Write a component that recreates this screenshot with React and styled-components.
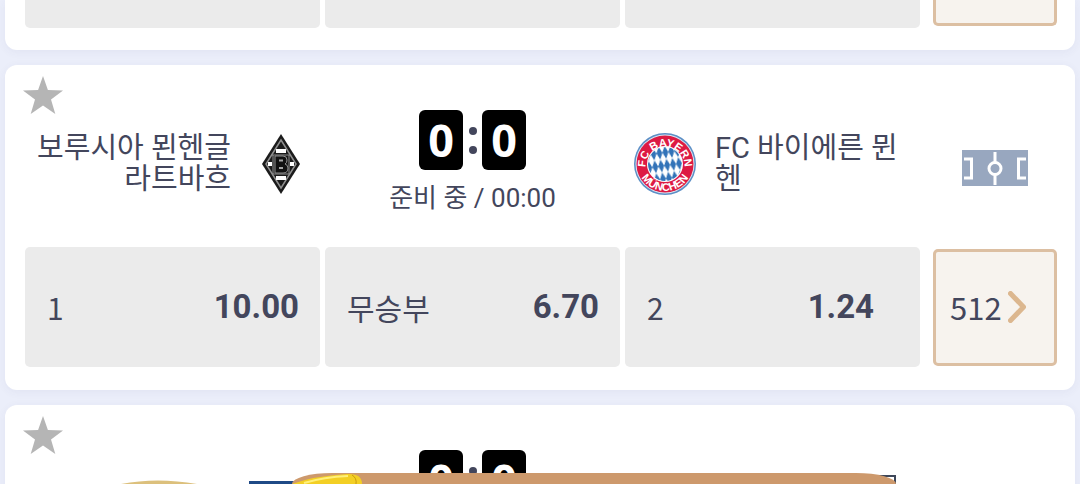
import React from "react"
import styled, { createGlobalStyle } from "styled-components"

const theme = {
  text: "#43465c",
  cell: "#ebebeb",
  accent: "#dcbfa2",
  accentBackground: "#f7f3ee",
  bar: "#cd996c",
  textFont: `"Noto Sans CJK KR", sans-serif`,
  numberFont: `Roboto, "Noto Sans CJK KR", sans-serif`,
  boardFont: `"Noto Sans", "Open Sans", sans-serif`,
}

const GlobalStyle = createGlobalStyle`
  * {
    box-sizing: border-box;
  }

  body {
    margin: 0;
    overflow: hidden;
    background: #ebeefa;
    color: ${theme.text};
    font-family: ${theme.textFont};
  }

  button {
    border: 0;
    padding: 0;
    color: inherit;
    font-family: inherit;
    cursor: pointer;
  }
`

const Page = styled.main`
  display: flex;
  flex-direction: column;
  gap: 15px;
  height: 100vh;
  padding: 0 5px;
  overflow: hidden;
`

const Card = styled.article`
  flex: none;
  padding: ${p => (p.$continued ? "0 18px 22px 20px" : "10px 18px 23px 20px")};
  border-radius: ${p => (p.$continued ? "0 0 12px 12px" : "12px")};
  background: #fff;
  box-shadow: 0 2px 10px rgba(60, 70, 120, 0.06);
`

const StarButton = styled.button`
  display: block;
  width: 40px;
  height: 40px;
  margin-left: -2px;
  background: none;

  svg {
    display: block;
  }
`

const MatchRow = styled.div`
  display: grid;
  grid-template-columns: 335fr 225fr 377fr 95fr;
  align-items: center;
  height: 108px;
  margin-top: -5px;
`

const Team = styled.div`
  display: flex;
  align-items: center;
  gap: ${p => (p.$home ? "31px" : "19px")};
  justify-content: ${p => (p.$home ? "flex-end" : "flex-start")};
  padding: ${p => (p.$home ? "0 60px 0 0" : "0 20px 0 49px")};
`

const TeamName = styled.span`
  flex: 0 1 200px;
  font-family: ${theme.numberFont};
  font-size: 29px;
  line-height: 31px;
  text-align: ${p => (p.$home ? "right" : "left")};
  word-break: break-all;
`

const Crest = styled.svg`
  flex: none;
  display: block;
`

const Score = styled.div`
  display: flex;
  flex-direction: column;
  align-items: center;
  align-self: start;
  white-space: nowrap;
`

const Board = styled.div`
  display: flex;
  align-items: center;
  gap: 5px;
`

const Digit = styled.span`
  width: 44px;
  height: 60px;
  border-radius: 6px;
  background: #000;
  color: #fff;
  font-family: ${theme.boardFont};
  font-size: 45px;
  font-weight: 700;
  line-height: 59px;
  text-align: center;
`

const Colon = styled.span`
  display: flex;
  flex-direction: column;
  align-items: center;
  gap: 11px;
  width: 9px;

  &::before,
  &::after {
    content: "";
    width: 8px;
    height: 8px;
    border-radius: 50%;
    background: ${theme.text};
  }
`

const Status = styled.span`
  margin-top: 8px;
  font-family: ${theme.numberFont};
  font-size: 26px;
  line-height: 40px;
`

const PitchButton = styled.button`
  justify-self: start;
  padding-top: 8px;
  background: none;

  svg {
    display: block;
  }
`

const OddsRow = styled.div`
  display: flex;
  align-items: center;
  gap: 13px;
  margin-top: ${p => (p.$continued ? "0" : "29px")};
`

const OddsGrid = styled.div`
  flex: 1;
  display: grid;
  grid-template-columns: repeat(3, 1fr);
  gap: 5px;
`

const OddsButton = styled.button`
  display: flex;
  align-items: center;
  justify-content: space-between;
  height: ${p => (p.$continued ? "28px" : "120px")};
  padding: 0 ${p => (p.$wide ? "46px" : "21px")} 0 22px;
  border-radius: ${p => (p.$continued ? "0 0 5px 5px" : "5px")};
  background: ${theme.cell};
`

const OddsLabel = styled.span`
  font-size: 30px;
  line-height: 40px;
`

const OddsValue = styled.span`
  font-family: ${theme.numberFont};
  font-size: 33px;
  font-weight: 700;
  line-height: 40px;
`

const MoreButton = styled.button`
  flex: none;
  display: flex;
  align-items: center;
  gap: 6px;
  width: 124px;
  height: 117px;
  padding-left: 14px;
  border: 3px solid ${theme.accent};
  border-radius: 5px;
  background: ${theme.accentBackground};
  font-size: 31px;
  line-height: 40px;
`

const ContinuedMore = styled(MoreButton)`
  align-self: flex-start;
  height: 26px;
  border-top: 0;
  border-radius: 0 0 5px 5px;
`

const BottomBar = styled.div`
  position: fixed;
  bottom: 0;
  left: 27%;
  width: 56%;
  height: 11px;
  border-radius: 40px 40px 0 0 / 11px 11px 0 0;
  background: ${theme.bar};
`

const Peek = styled.svg`
  position: fixed;
  bottom: 0;
  left: ${p => p.$left};
  display: block;
`

const Star = () => (
  <svg width="40" height="40" viewBox="0 0 40 40" aria-hidden="true">
    <path
      fill="#b5b5b5"
      d="M20 1l4.900 14.100 15.100.3-12 9.200 4.300 14.400L20 30.400 7.700 39 12 24.600 0 15.400l15.100-.3z"
    />
  </svg>
)

const GladbachCrest = () => (
  <Crest width="38" height="60" viewBox="0 0 38 60" role="img" aria-label="보루시아 묀헨글라트바흐">
    <path d="M19 0l19 30-19 30L0 30z" fill="#1b1b1b" />
    <path d="M19 6l15 24-15 24L4 30z" fill="none" stroke="#8f8f8f" strokeWidth="1.500" />
    <path d="M14 15h10v4H14zM14 42h10v4H14zM6 28h4v4H6zM28 28h4v4h-4z" fill="#fff" />
    <path d="M10 21h18M10 40h18M11 21v19M27 21v19" stroke="#8d8d8d" strokeWidth="1" />
    <path
      d="M13 22h8q4 0 4 4 0 3-2 4 3 1 3 4 0 5-5 5h-8z"
      fill="#111"
      stroke="#8f8f8f"
      strokeWidth="1"
    />
    <path d="M17 26.500h4M17 34h4" stroke="#a5a5a5" strokeWidth="2" />
  </Crest>
)

const BayernCrest = () => (
  <Crest width="62" height="62" viewBox="0 0 62 62" role="img" aria-label="FC 바이에른 뮌헨">
    <defs>
      <pattern
        id="lozenges"
        width="6"
        height="13"
        patternUnits="userSpaceOnUse"
        patternTransform="rotate(-8 31 31)"
      >
        <path d="M3 0l3 6.500-3 6.500-3-6.500z" fill="#3273b8" />
      </pattern>
      <path id="arc-top" d="M11.500 33a19.500 19.500 0 0 1 39 0" />
      <path id="arc-bottom" d="M4 31a27 27 0 0 0 54 0" />
    </defs>
    <circle cx="31" cy="31" r="31" fill="#5c8fc6" />
    <circle cx="31" cy="31" r="29.500" fill="#dbe5f1" />
    <circle cx="31" cy="31" r="28.500" fill="#dd1a43" />
    <circle cx="31" cy="31" r="18" fill="#fff" />
    <circle cx="31" cy="31" r="17" fill="url(#lozenges)" />
    <g fill="#fff" fontFamily="Liberation Sans, sans-serif" fontWeight="700" fontSize="11">
      <text textAnchor="middle">
        <textPath href="#arc-top" startOffset="50%">
          FC BAYERN
        </textPath>
      </text>
      <text textAnchor="middle">
        <textPath href="#arc-bottom" startOffset="50%">
          MÜNCHEN
        </textPath>
      </text>
    </g>
  </Crest>
)

const Pitch = () => (
  <svg width="66" height="36" viewBox="0 0 66 36" aria-hidden="true">
    <path d="M0 0h66v36H0z" fill="#98a7bf" />
    <g fill="none" stroke="#fff" strokeWidth="3">
      <path d="M2 9h7.500v19H2M64 9h-7.500v19H64M33 2v10M33 25v10" />
      <circle cx="33" cy="18.500" r="6" />
    </g>
  </svg>
)

const Chevron = () => (
  <svg width="18" height="32" viewBox="0 0 18 32" aria-hidden="true">
    <path
      d="M2.500 2.500L15.500 16l-13 13.500"
      fill="none"
      stroke="#dcb78f"
      strokeWidth="5"
      strokeLinecap="round"
      strokeLinejoin="round"
    />
  </svg>
)

const ScoreBoard = ({ home, away, status }) => (
  <Score>
    <Board>
      <Digit>{home}</Digit>
      <Colon />
      <Digit>{away}</Digit>
    </Board>
    {status && <Status>{status}</Status>}
  </Score>
)

const FavoriteButton = () => (
  <StarButton type="button" aria-label="즐겨찾기">
    <Star />
  </StarButton>
)

const odds = [
  { label: "1", value: "10.00" },
  { label: "무승부", value: "6.70" },
  { label: "2", value: "1.24", wide: true },
]

const App = () => (
  <>
    <GlobalStyle />
    <Page>
      <Card $continued>
        <OddsRow $continued>
          <OddsGrid>
            {odds.map(o => (
              <OddsButton key={o.label} type="button" aria-label={o.label} $continued />
            ))}
          </OddsGrid>
          <ContinuedMore type="button" aria-label="더보기" />
        </OddsRow>
      </Card>

      <Card>
        <FavoriteButton />
        <MatchRow>
          <Team $home>
            <TeamName $home>보루시아 묀헨글라트바흐</TeamName>
            <GladbachCrest />
          </Team>
          <ScoreBoard home="0" away="0" status="준비 중 / 00:00" />
          <Team>
            <BayernCrest />
            <TeamName>FC 바이에른 뮌헨</TeamName>
          </Team>
          <PitchButton type="button" aria-label="경기장">
            <Pitch />
          </PitchButton>
        </MatchRow>
        <OddsRow>
          <OddsGrid>
            {odds.map(o => (
              <OddsButton key={o.label} type="button" $wide={o.wide}>
                <OddsLabel>{o.label}</OddsLabel>
                <OddsValue>{o.value}</OddsValue>
              </OddsButton>
            ))}
          </OddsGrid>
          <MoreButton type="button">
            512
            <Chevron />
          </MoreButton>
        </OddsRow>
      </Card>

      <Card>
        <FavoriteButton />
        <MatchRow>
          <span />
          <ScoreBoard home="0" away="0" />
        </MatchRow>
      </Card>
    </Page>

    <Peek $left="11%" width="80" height="4" viewBox="0 0 80 4" aria-hidden="true">
      <path d="M2 4Q38-3 78 4z" fill="#dcc07c" />
    </Peek>
    <Peek $left="23%" width="50" height="3" viewBox="0 0 50 3" aria-hidden="true">
      <path d="M1 0h49v3H1z" fill="#1f4a86" />
    </Peek>
    <Peek $left="81%" width="22" height="10" viewBox="0 0 22 10" aria-hidden="true">
      <path d="M0 2h20v8" fill="none" stroke="#3e4759" strokeWidth="2" />
    </Peek>
    <BottomBar />
    <Peek $left="27%" width="72" height="11" viewBox="0 0 72 11" aria-hidden="true">
      <path d="M0 11Q22 3 55 1q15-1 15 10z" fill="#f3cf24" />
      <path d="M12 10Q32 4 56 3" fill="none" stroke="#fff07a" strokeWidth="2" />
      <path d="M60 2q5 3 4 9" fill="none" stroke="#c99a10" strokeWidth="1" />
    </Peek>
  </>
)

export default App
